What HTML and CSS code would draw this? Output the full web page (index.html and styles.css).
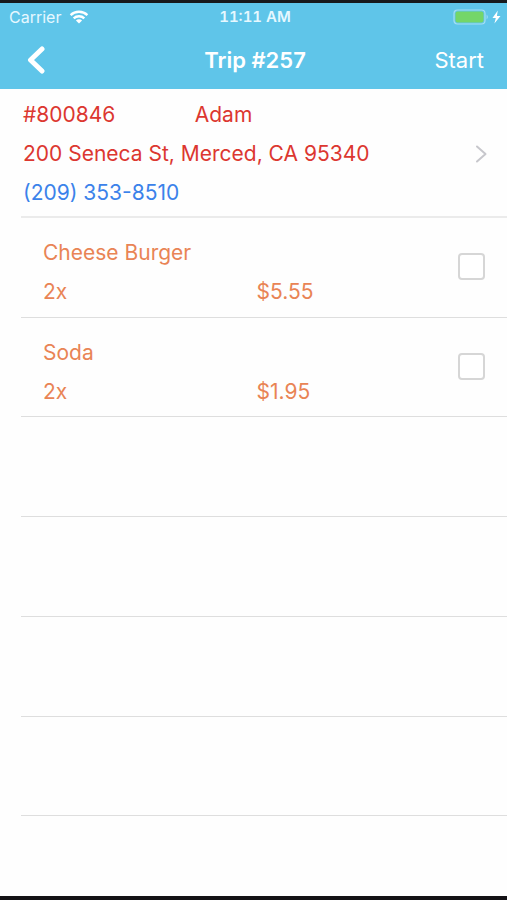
FILE: index.html
```html
<!DOCTYPE html>
<html lang="en">
<head>
  <meta charset="utf-8">
  <meta name="viewport" content="width=device-width, initial-scale=1">
  <title>Trip #257</title>
  <link rel="stylesheet" href="styles.css">
</head>
<body>
  <div class="screen">
    <header class="top">
      <div class="status">
        <div class="carrier">
          <span>Carrier</span>
          <svg class="wifi" viewBox="0 0 20 14" aria-hidden="true">
            <path d="M1.6 5.2a12 12 0 0 1 16.8 0M4.7 8.4a7.6 7.6 0 0 1 10.6 0"/>
            <path class="wifi-dot" d="M10 13.6 6.9 10.6a4.4 4.4 0 0 1 6.2 0z"/>
          </svg>
        </div>
        <span class="time">11:11 AM</span>
        <svg class="battery" viewBox="0 0 48 16" aria-hidden="true">
          <rect class="battery-shell" x="1" y="1" width="31" height="14" rx="3.500"/>
          <rect class="battery-level" x="2.500" y="2.500" width="28" height="11" rx="2"/>
          <path class="battery-cap" d="M33.600 5.500q2.400 2.500 0 5z"/>
          <path class="bolt" d="M44.800 1.500 39.500 9h3.300L41.400 14.500 47.500 7h-3.600z"/>
        </svg>
      </div>
      <nav class="nav">
        <button class="back" type="button" aria-label="Back">
          <svg viewBox="0 0 20 28" aria-hidden="true"><path d="M16 3 4.500 14 16 25"/></svg>
        </button>
        <h1 class="title">Trip #257</h1>
        <button class="start" type="button">Start</button>
      </nav>
    </header>

    <main class="list">
      <section class="order">
        <div class="order-info">
          <div class="order-head"><span>#800846</span><span>Adam</span></div>
          <div>200 Seneca St, Merced, CA 95340</div>
          <a class="phone" href="tel:+12093538510">(209) 353-8510</a>
        </div>
        <svg class="chevron" viewBox="0 0 12 18" aria-hidden="true"><path d="m2 1.500 8.500 7.500-8.500 7.500"/></svg>
      </section>

      <div class="rows">
        <label class="row item">
          <span class="item-info">
            <span>Cheese Burger</span>
            <span class="item-line"><span>2x</span><span>$5.55</span></span>
          </span>
          <input class="check" type="checkbox">
        </label>
        <label class="row item">
          <span class="item-info">
            <span>Soda</span>
            <span class="item-line"><span>2x</span><span>$1.95</span></span>
          </span>
          <input class="check" type="checkbox">
        </label>
        <div class="row"></div>
        <div class="row"></div>
        <div class="row"></div>
        <div class="row"></div>
      </div>
    </main>
  </div>
</body>
</html>
```
FILE: styles.css
```css
* {
  box-sizing: border-box;
}

body {
  margin: 0;
  background: #fefefe;
  font-family: Inter, "Liberation Sans", sans-serif;
  font-size: 21px;
  line-height: 39px;
}

button {
  padding: 0;
  border: 0;
  background: none;
  color: inherit;
  font: inherit;
}

svg {
  display: block;
  fill: none;
  stroke-linecap: round;
  stroke-linejoin: round;
}

.screen {
  display: flex;
  flex-direction: column;
  min-height: 100vh;
  border-top: 3px solid #17191c;
  border-bottom: 4px solid #141215;
}

.top {
  background: #5fc5e9;
  color: #fff;
}

.status,
.nav {
  display: grid;
  grid-template-columns: 1fr auto 1fr;
  align-items: center;
}

.status {
  height: 28px;
  padding: 0 6px 0 9px;
  font-size: 16px;
  line-height: 28px;
}

.carrier {
  display: flex;
  align-items: center;
  gap: 8px;
  color: #e6f8ff;
}

.wifi {
  width: 20px;
  height: 14px;
  stroke: #fff;
  stroke-width: 2.4;
  stroke-linecap: butt;
}

.wifi-dot {
  fill: #fff;
  stroke: none;
}

.time {
  color: #e6f8ff;
  font-size: 15px;
  font-weight: 600;
  font-variant-numeric: tabular-nums;
}

.battery {
  justify-self: end;
  width: 48px;
  height: 16px;
}

.battery-shell {
  stroke: #a5dff3;
  stroke-width: 1.2;
}

.battery-level {
  fill: #74d669;
}

.battery-cap {
  fill: #a5dff3;
}

.bolt {
  fill: #fff;
}

.nav {
  height: 58px;
  padding: 0 23px 0 26px;
}

.back {
  justify-self: start;
}

.back svg {
  width: 20px;
  height: 28px;
  stroke: #fff;
  stroke-width: 5;
}

.title {
  margin: 0;
  font-size: 22px;
  font-weight: 600;
}

.start {
  justify-self: end;
  font-size: 22px;
}

.list {
  display: flex;
  flex: 1;
  flex-direction: column;
}

.order {
  display: flex;
  align-items: center;
  justify-content: space-between;
  margin-left: 21px;
  padding: 6px 20px 4px 2px;
  border-bottom: 2px solid #ebebeb;
  color: #dc3730;
}

.order-head {
  display: grid;
  grid-template-columns: 38% 1fr;
}

.order-info {
  flex: 1;
}

.phone {
  color: #3b82ea;
  text-decoration: none;
}

.chevron {
  width: 12px;
  height: 18px;
  stroke: #c7c7cc;
  stroke-width: 2;
}

.rows {
  display: grid;
  flex: 1;
  grid-template-rows: repeat(6, 5fr) 4fr;
}

.row {
  margin-left: 21px;
  border-bottom: 1px solid #dedede;
}

.item {
  display: flex;
  align-items: center;
  padding: 10px 22px 0 22px;
  color: #e98455;
}

.item-info {
  display: grid;
  flex: 1;
}

.item-line {
  display: grid;
  grid-template-columns: 1fr 1fr;
  column-gap: 12px;
}

.check {
  appearance: none;
  width: 27px;
  height: 27px;
  margin: 0 0 12px;
  border: 2px solid #d6d6d6;
  border-radius: 4px;
  background: #fff;
}

.check:checked {
  background: #5fc5e9;
}
```
